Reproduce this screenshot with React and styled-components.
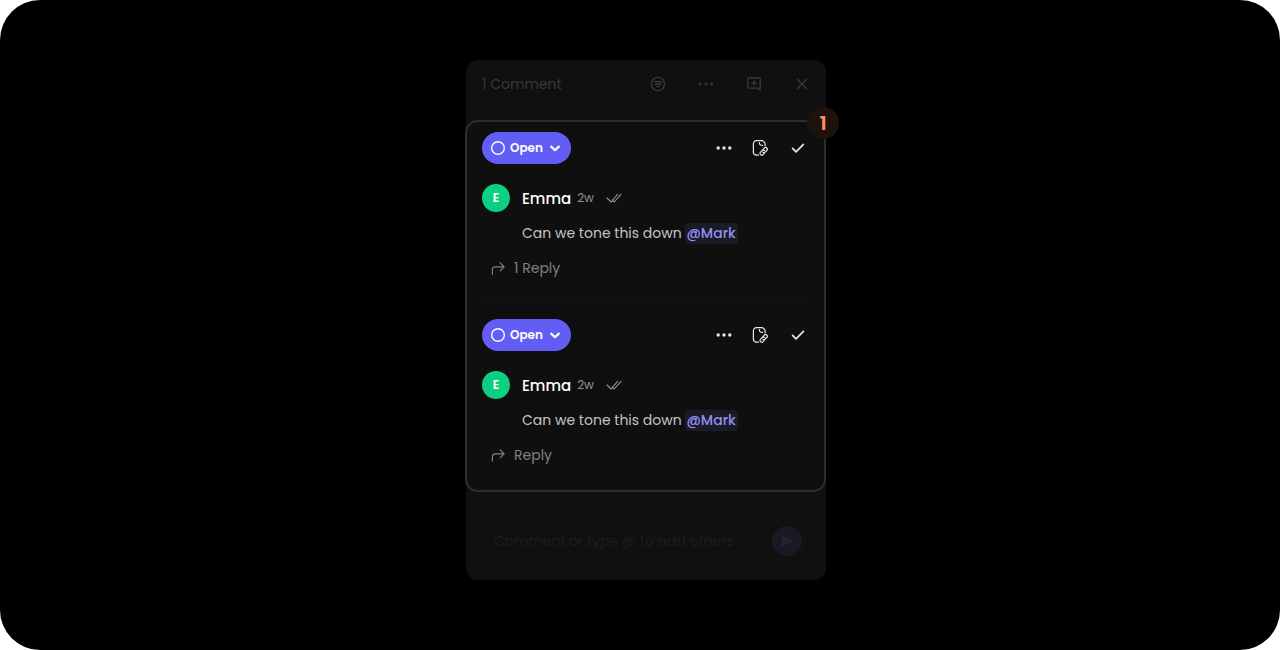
import React, { useState } from 'react';
import styled, { createGlobalStyle } from 'styled-components';

const comments = [
  { id: 1, author: 'Emma', age: '2w', text: 'Can we tone this down', mention: '@Mark', reply: '1 Reply' },
  { id: 2, author: 'Emma', age: '2w', text: 'Can we tone this down', mention: '@Mark', reply: 'Reply' },
];

function DotsIcon({ r = 2 }) {
  return (
    <Icon viewBox="0 0 16 16" aria-hidden="true">
      <g fill="currentColor" stroke="none">
        <circle cx="2.2" cy="8" r={r} />
        <circle cx="8" cy="8" r={r} />
        <circle cx="13.8" cy="8" r={r} />
      </g>
    </Icon>
  );
}

function FilterIcon() {
  return (
    <Icon viewBox="0 0 16 16" $stroke={1.4} aria-hidden="true">
      <circle cx="8" cy="8" r="6.6" />
      <path d="M4.4 5.8h7.2M5.4 8.2h5.2M6.8 10.6h2.4" />
    </Icon>
  );
}

function AddCommentIcon() {
  return (
    <Icon viewBox="0 0 16 16" $stroke={1.4} aria-hidden="true">
      <path d="M14.2 14.4V2.6a.9.9 0 0 0-.9-.9H2.7a.9.9 0 0 0-.9.9v8.6c0 .5.4.9.9.9h9.2z" />
      <path d="M8 4.6v4.8M5.6 7h4.8" />
    </Icon>
  );
}

function CloseIcon() {
  return (
    <Icon viewBox="0 0 16 16" $stroke={1.4} aria-hidden="true">
      <path d="M3.4 3.4l9.2 9.2M12.6 3.4l-9.2 9.2" />
    </Icon>
  );
}

function PageLinkIcon() {
  return (
    <Icon viewBox="0 0 16 16" aria-hidden="true">
      <path d="M6.4 15.2H4.4a3 3 0 0 1-3-3V3.7a3 3 0 0 1 3-3h5.4c.6 0 1.2.2 1.6.7l1 1c.5.5.7 1 .7 1.7v1.9" />
      <path d="M7.4 2.6c-.2 1.8.8 2.8 3.2 2.8" />
      <path d="M11 9.4l1.3-1.3a1.7 1.7 0 0 1 2.5 2.4l-1.6 1.6a1.7 1.7 0 0 1-2.4 0" />
      <path d="M12.4 13.2l-1.4 1.4a1.7 1.7 0 0 1-2.5-2.4l1.6-1.6a1.7 1.7 0 0 1 2.4 0" />
    </Icon>
  );
}

function CheckIcon() {
  return (
    <Icon $size={20} $stroke={1.7} viewBox="0 0 20 20" aria-hidden="true">
      <path d="M4.6 10.4L8 13.8l7.4-7.4" />
    </Icon>
  );
}

function SeenIcon() {
  return (
    <Icon $stroke={1.1} viewBox="0 0 16 16" aria-hidden="true">
      <path d="M1 8l4.2 4 6.4-7.6M6.2 9.8l2 2.2 6.8-7.6" />
    </Icon>
  );
}

function ReplyIcon() {
  return (
    <Icon viewBox="0 0 16 16" aria-hidden="true">
      <path d="M2.4 14.2V9.6A2.8 2.8 0 0 1 5.2 6.8H14M10.2 2.8l3.9 4-3.9 4" />
    </Icon>
  );
}

function Comment({ comment }) {
  const [status, setStatus] = useState('Open');

  return (
    <Item>
      <Toolbar>
        <StatusPill>
          <Icon viewBox="0 0 16 16" $stroke={1.4} aria-hidden="true">
            <circle cx="8" cy="8" r="6.3" />
          </Icon>
          <StatusSelect
            aria-label="Status"
            value={status}
            onChange={(e) => setStatus(e.target.value)}
          >
            <option>Open</option>
          </StatusSelect>
          <Icon viewBox="0 0 16 16" $stroke={2.2} aria-hidden="true">
            <path d="M4.2 6.6L8 10.2l3.8-3.6" />
          </Icon>
        </StatusPill>
        <Actions>
          <IconButton aria-label="More"><DotsIcon r={1.7} /></IconButton>
          <IconButton aria-label="Copy link"><PageLinkIcon /></IconButton>
          <IconButton aria-label="Resolve"><CheckIcon /></IconButton>
        </Actions>
      </Toolbar>
      <Author>
        <Avatar>{comment.author[0]}</Avatar>
        <Name>{comment.author}</Name>
        <Age>{comment.age}</Age>
        <SeenIcon />
      </Author>
      <Message>
        {comment.text} <Mention href="#mark">{comment.mention}</Mention>
      </Message>
      <ReplyButton>
        <ReplyIcon />
        {comment.reply}
      </ReplyButton>
    </Item>
  );
}

function App() {
  const [draft, setDraft] = useState('');

  return (
    <>
      <GlobalStyle />
      <Stage>
        <Panel>
          <Header>
            <Title>1 Comment</Title>
            <HeaderActions>
              <IconButton aria-label="Filter"><FilterIcon /></IconButton>
              <IconButton aria-label="More"><DotsIcon r={1.5} /></IconButton>
              <IconButton aria-label="Add comment"><AddCommentIcon /></IconButton>
              <IconButton aria-label="Close"><CloseIcon /></IconButton>
            </HeaderActions>
          </Header>
          <Threads>
            <Badge>1</Badge>
            {comments.map((comment) => (
              <Comment key={comment.id} comment={comment} />
            ))}
          </Threads>
          <Composer onSubmit={(e) => e.preventDefault()}>
            <ComposerInput
              aria-label="Comment"
              placeholder="Comment or type @ to add others"
              value={draft}
              onChange={(e) => setDraft(e.target.value)}
            />
            <SendButton type="submit" aria-label="Send">
              <Icon viewBox="0 0 16 16" aria-hidden="true">
                <path
                  d="M2.6 3.2l11.4 4.8-11.4 4.8 1.2-4.1 4-.7-4-.7z"
                  fill="currentColor"
                />
              </Icon>
            </SendButton>
          </Composer>
        </Panel>
      </Stage>
    </>
  );
}

export default App;

// Styled Components
const GlobalStyle = createGlobalStyle`
  * {
    box-sizing: border-box;
  }

  body {
    margin: 0;
    background: #fff;
    font-family: Poppins, Inter, sans-serif;
  }

  button, input, select {
    font-family: inherit;
  }
`;

const Stage = styled.main`
  display: flex;
  justify-content: center;
  align-items: flex-start;
  min-height: 100vh;
  padding: 60px 0 60px 12px;
  border-radius: 40px;
  background: #000;
`;

const Panel = styled.section`
  width: 100%;
  max-width: 360px;
  padding-bottom: 16px;
  border-radius: 12px;
  background: #101010;
`;

const Header = styled.header`
  display: flex;
  align-items: center;
  justify-content: space-between;
  margin: 0 16px;
  padding: 14px 0 17px;
  border-bottom: 1px solid #151515;
  color: #383838;
`;

const Title = styled.h1`
  margin: 0;
  font-size: 14px;
  font-weight: 400;
  line-height: 20px;
`;

const HeaderActions = styled.div`
  display: flex;
  align-items: center;
  gap: 32px;
`;

const Icon = styled.svg`
  display: block;
  flex: none;
  width: ${(props) => props.$size || 16}px;
  height: ${(props) => props.$size || 16}px;
  fill: none;
  stroke: currentColor;
  stroke-width: ${(props) => props.$stroke || 1.2};
  stroke-linecap: round;
  stroke-linejoin: round;
`;

const IconButton = styled.button`
  padding: 0;
  border: none;
  background: none;
  color: inherit;
  cursor: pointer;
`;

const Threads = styled.div`
  position: relative;
  margin: 8px 0 0 -1px;
  padding: 10px 15px 25px;
  border: 2px solid #2d2d2d;
  border-radius: 13px;
  background: #0f0f0f;
`;

const Badge = styled.span`
  position: absolute;
  top: -15px;
  right: -15px;
  display: flex;
  align-items: center;
  justify-content: center;
  width: 32px;
  height: 32px;
  border-radius: 50%;
  background: #1e120d;
  color: #ff9162;
  font-size: 20px;
  font-weight: 600;
  line-height: 32px;
`;

const Item = styled.article`
  & + & {
    margin-top: 20px;
    padding-top: 20px;
    border-top: 1px solid #151515;
  }
`;

const Toolbar = styled.div`
  display: flex;
  align-items: center;
  justify-content: space-between;
`;

const StatusPill = styled.label`
  display: flex;
  align-items: center;
  gap: 4px;
  height: 32px;
  padding: 0 8px;
  border-radius: 16px;
  background: #625df5;
  color: #fff;
`;

const StatusSelect = styled.select`
  appearance: none;
  width: 33px;
  padding: 0;
  border: none;
  background: none;
  color: inherit;
  font-size: 12px;
  font-weight: 600;
  line-height: 16px;
`;

const Actions = styled.div`
  display: flex;
  align-items: center;
  gap: 20px;
  padding-right: 1px;
  color: #e6e6e6;
`;

const Author = styled.div`
  display: flex;
  align-items: center;
  margin-top: 20px;
  color: #949494;
`;

const Avatar = styled.span`
  display: flex;
  align-items: center;
  justify-content: center;
  width: 28px;
  height: 28px;
  margin-right: 12px;
  border-radius: 50%;
  background: #0dcf82;
  color: #fff;
  font-size: 12px;
  font-weight: 600;
`;

const Name = styled.strong`
  margin-right: 6px;
  color: #fff;
  font-size: 15px;
  font-weight: 500;
`;

const Age = styled.span`
  margin-right: 12px;
  font-size: 12px;
`;

const Message = styled.p`
  margin: 11px 0 0 40px;
  color: #c4c4c4;
  font-size: 14px;
  line-height: 21px;
`;

const Mention = styled.a`
  display: inline-block;
  padding: 0 2px 0 1px;
  border-radius: 4px;
  background: #1b1a25;
  color: #928ef5;
  font-weight: 500;
  text-decoration: none;
`;

const ReplyButton = styled.button`
  display: flex;
  align-items: center;
  gap: 8px;
  margin: 14px 0 0 8px;
  padding: 0;
  border: none;
  background: none;
  color: #808080;
  font-size: 14px;
  line-height: 20px;
  cursor: pointer;
`;

const Composer = styled.form`
  display: flex;
  align-items: center;
  margin: 26px 16px 0;
  padding: 7px 7px 7px 11px;
  border: 1px solid #141414;
  border-radius: 12px;
`;

const ComposerInput = styled.input`
  flex: 1;
  min-width: 0;
  padding: 0;
  border: none;
  outline: none;
  background: none;
  color: #c4c4c4;
  font-size: 14px;
  line-height: 20px;

  &::placeholder {
    color: #1d1d1d;
    opacity: 1;
  }
`;

const SendButton = styled.button`
  display: flex;
  align-items: center;
  justify-content: center;
  width: 30px;
  height: 30px;
  padding: 0;
  border: none;
  border-radius: 50%;
  background: #1a1824;
  color: #262626;
  cursor: pointer;
`;
